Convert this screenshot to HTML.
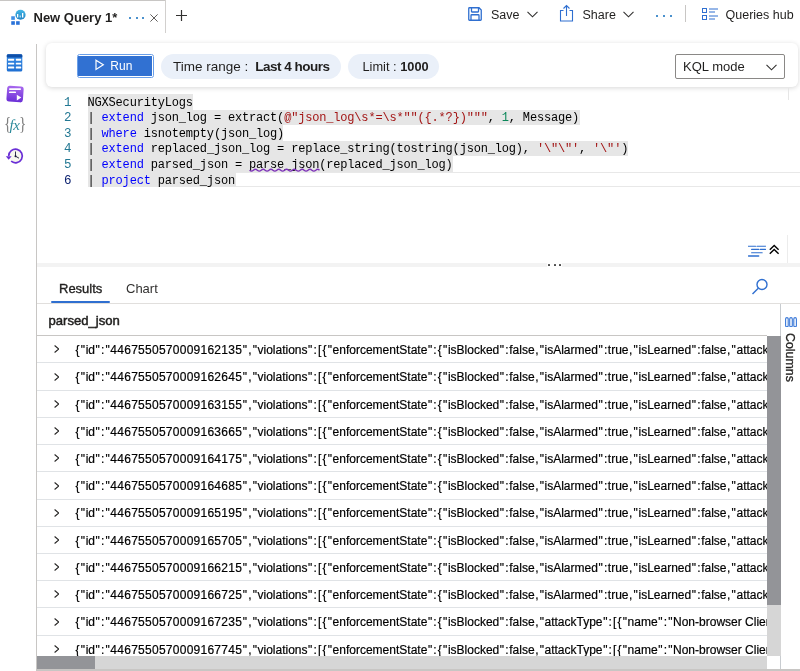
<!DOCTYPE html>
<html><head><meta charset="utf-8">
<style>
*{box-sizing:border-box;margin:0;padding:0}
html,body{width:800px;height:671px;overflow:hidden;background:#fff;font-family:"Liberation Sans",sans-serif;color:#201f1e}
.a{position:absolute}
.topline{left:0;top:0;width:166px;height:1px;background:#c8c6c4}
.tabr{left:165px;top:0;width:1px;height:33px;background:#d2d0ce}
.vsep{left:36px;top:44px;width:1px;height:627px;background:#c8c6c4}
.card{left:46px;top:43px;width:752px;height:44px;border-radius:6px;background:#fff;box-shadow:0 1px 5px rgba(0,0,0,0.16)}
.code{font-family:"Liberation Mono",monospace;font-size:12px;letter-spacing:-0.18px;white-space:pre;color:#000}
.ln{font-family:"Liberation Mono",monospace;font-size:12.5px;color:#237893;width:20px;text-align:right}
.sel{background:#e6e6e6}
.k{color:#0000ff}.s{color:#a31515}.n{color:#098658}
.row{left:37px;width:730px;height:27.22px;border-bottom:1px solid #e0e3e6;overflow:hidden}
.rowt{position:absolute;left:38px;top:6.9px;font-size:12px;color:#000;white-space:nowrap;-webkit-text-stroke:0.2px #000}
.rowt i,.rowt u{font-style:normal;text-decoration:none;letter-spacing:1.17px;margin-left:0.58px;margin-right:-0.58px}
.rowt b{font-weight:normal;letter-spacing:0.26px}
.chev{position:absolute;left:16.8px;top:9.3px;width:5.5px;height:8px}
</style></head><body><div id="root" style="position:absolute;left:0;top:0;width:800px;height:671px;will-change:transform">
<!-- top bar -->
<div class="a topline"></div>
<div class="a tabr"></div>
<svg class="a" style="left:10px;top:9px" width="17" height="16" viewBox="0 0 17 16">
 <defs><linearGradient id="cg" x1="0" y1="0" x2="0" y2="1"><stop offset="0" stop-color="#45b8e6"/><stop offset="1" stop-color="#1f82c4"/></linearGradient></defs>
 <rect x="1.25" y="7.25" width="3.6" height="3.6" fill="#3d8ee6"/><rect x="1.25" y="12.2" width="3.6" height="3.6" fill="#2a72d8"/><rect x="6.1" y="12.2" width="3.6" height="3.6" fill="#2a72d8"/>
 <circle cx="10.5" cy="5.75" r="5.1" fill="url(#cg)"/>
 <rect x="7" y="5" width="1.3" height="3.5" fill="#fff"/><rect x="9.7" y="6.5" width="0.9" height="2" fill="#fff"/><rect x="12" y="4" width="1.3" height="4.5" fill="#fff"/>
</svg>
<div class="a" style="left:33.5px;top:10px;font-size:13px;font-weight:bold;color:#201f1e">New Query 1*</div>
<div class="a" style="left:129px;top:16.5px;width:16px;height:3px;">
 <span class="a" style="left:0;top:0;width:2.2px;height:2.2px;border-radius:50%;background:#0f6cbd"></span>
 <span class="a" style="left:6.5px;top:0;width:2.2px;height:2.2px;border-radius:50%;background:#0f6cbd"></span>
 <span class="a" style="left:13px;top:0;width:2.2px;height:2.2px;border-radius:50%;background:#0f6cbd"></span>
</div>
<svg class="a" style="left:149.5px;top:14px" width="8" height="8" viewBox="0 0 8 8"><path d="M0.4 0.4L7.6 7.6M7.6 0.4L0.4 7.6" stroke="#605e5c" stroke-width="1"/></svg>
<svg class="a" style="left:176px;top:10px" width="11" height="11" viewBox="0 0 11 11"><path d="M5.5 0V11M0 5.5H11" stroke="#323130" stroke-width="1.2"/></svg>

<!-- save/share -->
<svg class="a" style="left:468px;top:6.5px" width="14" height="14" viewBox="0 0 14 14"><path d="M1.5 0.75H11L13.25 3V12.5Q13.25 13.25 12.5 13.25H1.5Q0.75 13.25 0.75 12.5V1.5Q0.75 0.75 1.5 0.75Z M3.5 0.75V4.5Q3.5 5 4 5H10Q10.5 5 10.5 4.5V0.75 M3 13.25V8.5Q3 7.75 3.75 7.75H10.25Q11 7.75 11 8.5V13.25" fill="none" stroke="#2f6fd0" stroke-width="1.3"/></svg>
<div class="a" style="left:491px;top:7.5px;font-size:12.5px;color:#201f1e">Save</div>
<svg class="a" style="left:526.5px;top:10.5px" width="11" height="7" viewBox="0 0 11 7"><path d="M0.5 0.8L5.5 5.8L10.5 0.8" fill="none" stroke="#323130" stroke-width="1.1"/></svg>
<svg class="a" style="left:559px;top:4px" width="15" height="18" viewBox="0 0 15 18"><path d="M4.5 6.5H1.5V17H13.5V6.5H10.5 M7.5 12V1.5 M4.5 4.5L7.5 1.5L10.5 4.5" fill="none" stroke="#2f6fd0" stroke-width="1.1"/></svg>
<div class="a" style="left:582.5px;top:7.5px;font-size:12.5px;color:#201f1e">Share</div>
<svg class="a" style="left:623px;top:11px" width="11" height="7" viewBox="0 0 11 7"><path d="M0.5 0.8L5.5 5.8L10.5 0.8" fill="none" stroke="#323130" stroke-width="1.1"/></svg>
<div class="a" style="left:656px;top:14.5px;width:16px;height:3px">
 <span class="a" style="left:0;top:0;width:2.2px;height:2.2px;border-radius:50%;background:#0f6cbd"></span>
 <span class="a" style="left:7px;top:0;width:2.2px;height:2.2px;border-radius:50%;background:#0f6cbd"></span>
 <span class="a" style="left:14px;top:0;width:2.2px;height:2.2px;border-radius:50%;background:#0f6cbd"></span>
</div>
<div class="a" style="left:685px;top:5px;width:1px;height:17px;background:#c8c6c4"></div>
<svg class="a" style="left:702px;top:8px" width="17" height="12" viewBox="0 0 17 12"><rect x="0.5" y="0.5" width="4" height="4" fill="none" stroke="#2f6fd0"/><rect x="0.5" y="7.5" width="4" height="4" fill="none" stroke="#2f6fd0"/><path d="M7 1H16M7 4H13M7 8H16M7 11H13" stroke="#2f6fd0" stroke-width="1"/></svg>
<div class="a" style="left:725.5px;top:7.5px;font-size:12.5px;color:#201f1e">Queries hub</div>

<!-- sidebar -->
<div class="a vsep"></div>
<!-- sidebar icons -->
<svg class="a" style="left:6px;top:54px" width="17" height="18" viewBox="0 0 17 18">
 <defs><linearGradient id="tg" x1="0" y1="0" x2="0" y2="1"><stop offset="0" stop-color="#3a8ee6"/><stop offset="1" stop-color="#1f6fd2"/></linearGradient></defs>
 <rect x="0.8" y="0.2" width="15.5" height="17.4" rx="1.6" fill="url(#tg)"/>
 <rect x="0.8" y="0.2" width="15.5" height="3.4" rx="1.2" fill="#0f4fa8"/>
 <rect x="2" y="4.8" width="6.2" height="1.9" rx="0.6" fill="#fff"/><rect x="9.8" y="4.8" width="5.4" height="1.9" rx="0.6" fill="#fff"/>
 <rect x="2" y="8.7" width="6.2" height="1.9" rx="0.6" fill="#fff"/><rect x="9.8" y="8.7" width="5.4" height="1.9" rx="0.6" fill="#fff"/>
 <rect x="2" y="12.6" width="6.2" height="1.9" rx="0.6" fill="#fff"/><rect x="9.8" y="12.6" width="5.4" height="1.9" rx="0.6" fill="#fff"/>
</svg>
<svg class="a" style="left:5px;top:84px" width="20" height="20" viewBox="0 0 20 20">
 <defs><linearGradient id="pg" x1="0" y1="0" x2="0" y2="1"><stop offset="0" stop-color="#a868ee"/><stop offset="1" stop-color="#6a2fd6"/></linearGradient></defs>
 <rect x="1.8" y="2" width="16.5" height="16" rx="2.8" fill="url(#pg)" transform="rotate(4 10 10)"/>
 <rect x="4" y="4.3" width="12" height="1.7" rx="0.8" fill="#fff"/>
 <rect x="4" y="7.6" width="7" height="1.5" rx="0.7" fill="#fff"/>
 <path d="M11.8 10.8L16.3 13.6L11.8 16.4Z" fill="#fff"/>
</svg>
<div class="a" style="left:4px;top:114px;font-family:'Liberation Serif',serif;font-size:19px;color:#808080;line-height:20px;transform:scaleX(0.8);transform-origin:0 0">{</div>
<div class="a" style="left:19px;top:114px;font-family:'Liberation Serif',serif;font-size:19px;color:#808080;line-height:20px;transform:scaleX(0.8);transform-origin:0 0">}</div>
<div class="a" style="left:9.5px;top:115.5px;font-family:'Liberation Serif',serif;font-style:italic;font-size:15px;color:#2b8a9a;line-height:18px;letter-spacing:-0.3px">fx</div>
<svg class="a" style="left:5px;top:147px" width="19" height="18" viewBox="0 0 19 18">
 <circle cx="10.5" cy="9" r="6.5" fill="#f7f7ee"/>
 <path d="M3.7 9A6.8 6.8 0 1 1 6.13 14.2" fill="none" stroke="#6a2fd6" stroke-width="1.7"/>
 <path d="M0.8 9.2L6.6 9.2L3.7 12.8Z" fill="#6a2fd6"/>
 <path d="M10.5 4.5V9.2L14 11.2" fill="none" stroke="#1a1a3a" stroke-width="0.9"/>
 <circle cx="10.5" cy="9.2" r="1" fill="#1a1a3a"/>
</svg>


<!-- toolbar card -->
<div class="a card"></div>
<div class="a" style="left:76.5px;top:54px;width:77.5px;height:23.5px;border:1.2px solid #6a9fe8;border-radius:2.5px;background:#fff;padding:0.8px">
 <div style="width:100%;height:100%;background:#3171d2;position:relative">
  <svg class="a" style="left:16.5px;top:3.3px" width="10" height="12" viewBox="0 0 10 12"><path d="M1 1.2L8.3 5.8L1 10.4Z" fill="none" stroke="#fff" stroke-width="1.2"/></svg>
  <div class="a" style="left:32px;top:3px;font-size:12px;color:#fff">Run</div>
 </div>
</div>
<div class="a" style="left:161px;top:54px;width:180px;height:25px;border-radius:13px;background:#eaf0f9"></div>
<div class="a" style="left:173px;top:59px;font-size:13.5px;color:#201f1e">Time range :&nbsp; <b style="letter-spacing:-0.5px;margin-left:-0.5px">Last 4 hours</b></div>
<div class="a" style="left:348px;top:54px;width:91px;height:25px;border-radius:13px;background:#eaf0f9"></div>
<div class="a" style="left:362.5px;top:59px;font-size:12.8px;color:#201f1e">Limit : <b>1000</b></div>
<div class="a" style="left:675px;top:54px;width:110px;height:25px;border:1px solid #8a8886;border-radius:2px;background:#fff"></div>
<div class="a" style="left:683px;top:59px;font-size:13px;color:#201f1e">KQL mode</div>
<svg class="a" style="left:766px;top:64px" width="11" height="7" viewBox="0 0 11 7"><path d="M0.5 0.8L5.5 5.8L10.5 0.8" fill="none" stroke="#323130" stroke-width="1.1"/></svg>

<!-- editor -->
<div class="a" style="left:87.5px;top:172.3px;width:712.5px;height:15.2px;border-top:1.5px solid #e8e8e8;border-bottom:1.5px solid #e8e8e8"></div>
<div class="a" style="left:787.8px;top:88px;width:1px;height:12px;background:#e6e6e6"></div>
<div class="a" style="left:786.5px;top:234.5px;width:1.2px;height:28.5px;background:#ececec"></div>
<div class="a sel" style="left:87.5px;top:94.30px;width:105.5px;height:15.5px"></div>
<div class="a sel" style="left:87.5px;top:109.80px;width:492px;height:15.5px"></div>
<div class="a sel" style="left:87.5px;top:125.30px;width:195px;height:15.5px"></div>
<div class="a sel" style="left:87.5px;top:140.80px;width:540px;height:15.5px"></div>
<div class="a sel" style="left:87.5px;top:156.30px;width:365px;height:15.5px"></div>
<div class="a sel" style="left:87.5px;top:171.80px;width:148px;height:15.5px"></div>

<div class="a ln" style="left:51.5px;top:95.8px;line-height:15.55px">1<br>2<br>3<br>4<br>5<br><span style="color:#0b216f">6</span></div>
<div class="a code" style="left:87.5px;top:95.8px;line-height:15.55px">NGXSecurityLogs
| <span class="k">extend</span> json_log = extract(<span class="s">@"json_log\s*=\s*""({.*?})"""</span>, <span class="n">1</span>, Message)
| <span class="k">where</span> isnotempty(json_log)
| <span class="k">extend</span> replaced_json_log = replace_string(tostring(json_log), <span class="s">'\"\"'</span>, <span class="s">'\"'</span>)
| <span class="k">extend</span> parsed_json = parse_json(replaced_json_log)
| <span class="k">project</span> parsed_json</div>

<svg class="a" style="left:248.5px;top:167.5px" width="71" height="5" viewBox="0 0 71 5"><path d="M0.5 2.2 Q2.45 4.0 4.40 2.2 Q6.35 0.40000000000000013 8.30 2.2 Q10.25 4.0 12.20 2.2 Q14.15 0.40000000000000013 16.10 2.2 Q18.05 4.0 20.00 2.2 Q21.95 0.40000000000000013 23.90 2.2 Q25.85 4.0 27.80 2.2 Q29.75 0.40000000000000013 31.70 2.2 Q33.65 4.0 35.60 2.2 Q37.55 0.40000000000000013 39.50 2.2 Q41.45 4.0 43.40 2.2 Q45.35 0.40000000000000013 47.30 2.2 Q49.25 4.0 51.20 2.2 Q53.15 0.40000000000000013 55.10 2.2 Q57.05 4.0 59.00 2.2 Q60.95 0.40000000000000013 62.90 2.2 Q64.85 4.0 66.80 2.2 Q68.65 0.40000000000000013 70.50 2.2" fill="none" stroke="#7d32b8" stroke-width="1.3"/></svg>
<!-- editor bottom icons -->
<svg class="a" style="left:748px;top:244px" width="18" height="13" viewBox="0 0 18 13"><path d="M0 2.2H7.6M9 2.2H17.6M3.6 5.4H10.8M12.3 5.4H17.6M3.6 8.75H14.2" stroke="#2f6fd0" stroke-width="1.1" stroke-linecap="round"/><path d="M0.5 12H10.7" stroke="#2f6fd0" stroke-width="1.4" stroke-linecap="round"/></svg>
<svg class="a" style="left:769px;top:244px" width="11" height="11" viewBox="0 0 11 11"><path d="M0.8 5.8L5.2 1.4L9.6 5.8M0.8 9.8L5.2 5.4L9.6 9.8" fill="none" stroke="#000" stroke-width="1.4"/></svg>
<div class="a" style="left:37px;top:263px;width:763px;height:4px;background:#f3f3f3"></div>
<div class="a" style="left:547px;top:263px;width:15px;height:4px;background:#fff">
 <span class="a" style="left:1.3px;top:1px;width:2px;height:2px;border-radius:0.5px;background:#4a4a4a"></span>
 <span class="a" style="left:6.6px;top:1px;width:2px;height:2px;border-radius:0.5px;background:#4a4a4a"></span>
 <span class="a" style="left:11.9px;top:1px;width:2px;height:2px;border-radius:0.5px;background:#4a4a4a"></span>
</div>

<!-- results tabs -->
<div class="a" style="left:59px;top:280.7px;font-size:13px;color:#201f1e;-webkit-text-stroke:0.35px #201f1e">Results</div>
<div class="a" style="left:51px;top:301px;width:59px;height:2px;background:#2f6fd0;border-radius:1px"></div>
<div class="a" style="left:126px;top:280.7px;font-size:13px;color:#323130">Chart</div>
<div class="a" style="left:37px;top:303px;width:763px;height:1px;background:#e1dfdd"></div>
<svg class="a" style="left:751px;top:278px" width="18" height="18" viewBox="0 0 18 18"><circle cx="11" cy="6.5" r="5" fill="none" stroke="#2f6fd0" stroke-width="1.4"/><path d="M7.3 10.2L1.5 16" stroke="#2f6fd0" stroke-width="1.4"/></svg>
<div class="a" style="left:48.5px;top:312.5px;font-size:13.1px;color:#201f1e;-webkit-text-stroke:0.5px #201f1e">parsed_json</div>
<div class="a" style="left:37px;top:335px;width:730px;height:1px;background:#c8c6c4"></div>
<div class="a" style="left:780px;top:304px;width:1px;height:367px;background:#c8ccd0"></div>
<svg class="a" style="left:785px;top:316.5px" width="12" height="10.5" viewBox="0 0 12 10.5"><rect x="0.6" y="0.6" width="2.6" height="9.3" rx="1.3" fill="none" stroke="#3a78d8" stroke-width="1.1"/><rect x="4.7" y="0.6" width="2.6" height="9.3" rx="1.3" fill="none" stroke="#3a78d8" stroke-width="1.1"/><rect x="8.8" y="0.6" width="2.6" height="9.3" rx="1.3" fill="none" stroke="#3a78d8" stroke-width="1.1"/></svg>
<div class="a" style="left:783px;top:332.5px;font-size:12.4px;color:#201f1e;-webkit-text-stroke:0.3px #201f1e;transform-origin:0 0;transform:translate(14.3px,0) rotate(90deg);white-space:nowrap">Columns</div>
<div class="a row" style="top:336.20px"><svg class="chev" viewBox="0 0 5.5 8"><path d="M0.6 0.5L4.8 4L0.6 7.5" fill="none" stroke="#252423" stroke-width="1.1"/></svg><div class="rowt"><u>{</u><i>"</i>id<i>"</i><u>:</u><i>"</i><b>4467550570009162135</b><i>"</i><u>,</u><i>"</i>violations<i>"</i><u>:[{</u><i>"</i>enforcementState<i>"</i><u>:{</u><i>"</i>isBlocked<i>"</i><u>:</u>false<u>,</u><i>"</i>isAlarmed<i>"</i><u>:</u>true<u>,</u><i>"</i>isLearned<i>"</i><u>:</u>false<u>,</u><i>"</i>attackType<i>"</i><u>:[{</u><i>"</i>name<i>"</i></div></div>
<div class="a row" style="top:363.42px"><svg class="chev" viewBox="0 0 5.5 8"><path d="M0.6 0.5L4.8 4L0.6 7.5" fill="none" stroke="#252423" stroke-width="1.1"/></svg><div class="rowt"><u>{</u><i>"</i>id<i>"</i><u>:</u><i>"</i><b>4467550570009162645</b><i>"</i><u>,</u><i>"</i>violations<i>"</i><u>:[{</u><i>"</i>enforcementState<i>"</i><u>:{</u><i>"</i>isBlocked<i>"</i><u>:</u>false<u>,</u><i>"</i>isAlarmed<i>"</i><u>:</u>true<u>,</u><i>"</i>isLearned<i>"</i><u>:</u>false<u>,</u><i>"</i>attackType<i>"</i><u>:[{</u><i>"</i>name<i>"</i></div></div>
<div class="a row" style="top:390.64px"><svg class="chev" viewBox="0 0 5.5 8"><path d="M0.6 0.5L4.8 4L0.6 7.5" fill="none" stroke="#252423" stroke-width="1.1"/></svg><div class="rowt"><u>{</u><i>"</i>id<i>"</i><u>:</u><i>"</i><b>4467550570009163155</b><i>"</i><u>,</u><i>"</i>violations<i>"</i><u>:[{</u><i>"</i>enforcementState<i>"</i><u>:{</u><i>"</i>isBlocked<i>"</i><u>:</u>false<u>,</u><i>"</i>isAlarmed<i>"</i><u>:</u>true<u>,</u><i>"</i>isLearned<i>"</i><u>:</u>false<u>,</u><i>"</i>attackType<i>"</i><u>:[{</u><i>"</i>name<i>"</i></div></div>
<div class="a row" style="top:417.86px"><svg class="chev" viewBox="0 0 5.5 8"><path d="M0.6 0.5L4.8 4L0.6 7.5" fill="none" stroke="#252423" stroke-width="1.1"/></svg><div class="rowt"><u>{</u><i>"</i>id<i>"</i><u>:</u><i>"</i><b>4467550570009163665</b><i>"</i><u>,</u><i>"</i>violations<i>"</i><u>:[{</u><i>"</i>enforcementState<i>"</i><u>:{</u><i>"</i>isBlocked<i>"</i><u>:</u>false<u>,</u><i>"</i>isAlarmed<i>"</i><u>:</u>true<u>,</u><i>"</i>isLearned<i>"</i><u>:</u>false<u>,</u><i>"</i>attackType<i>"</i><u>:[{</u><i>"</i>name<i>"</i></div></div>
<div class="a row" style="top:445.08px"><svg class="chev" viewBox="0 0 5.5 8"><path d="M0.6 0.5L4.8 4L0.6 7.5" fill="none" stroke="#252423" stroke-width="1.1"/></svg><div class="rowt"><u>{</u><i>"</i>id<i>"</i><u>:</u><i>"</i><b>4467550570009164175</b><i>"</i><u>,</u><i>"</i>violations<i>"</i><u>:[{</u><i>"</i>enforcementState<i>"</i><u>:{</u><i>"</i>isBlocked<i>"</i><u>:</u>false<u>,</u><i>"</i>isAlarmed<i>"</i><u>:</u>true<u>,</u><i>"</i>isLearned<i>"</i><u>:</u>false<u>,</u><i>"</i>attackType<i>"</i><u>:[{</u><i>"</i>name<i>"</i></div></div>
<div class="a row" style="top:472.30px"><svg class="chev" viewBox="0 0 5.5 8"><path d="M0.6 0.5L4.8 4L0.6 7.5" fill="none" stroke="#252423" stroke-width="1.1"/></svg><div class="rowt"><u>{</u><i>"</i>id<i>"</i><u>:</u><i>"</i><b>4467550570009164685</b><i>"</i><u>,</u><i>"</i>violations<i>"</i><u>:[{</u><i>"</i>enforcementState<i>"</i><u>:{</u><i>"</i>isBlocked<i>"</i><u>:</u>false<u>,</u><i>"</i>isAlarmed<i>"</i><u>:</u>true<u>,</u><i>"</i>isLearned<i>"</i><u>:</u>false<u>,</u><i>"</i>attackType<i>"</i><u>:[{</u><i>"</i>name<i>"</i></div></div>
<div class="a row" style="top:499.52px"><svg class="chev" viewBox="0 0 5.5 8"><path d="M0.6 0.5L4.8 4L0.6 7.5" fill="none" stroke="#252423" stroke-width="1.1"/></svg><div class="rowt"><u>{</u><i>"</i>id<i>"</i><u>:</u><i>"</i><b>4467550570009165195</b><i>"</i><u>,</u><i>"</i>violations<i>"</i><u>:[{</u><i>"</i>enforcementState<i>"</i><u>:{</u><i>"</i>isBlocked<i>"</i><u>:</u>false<u>,</u><i>"</i>isAlarmed<i>"</i><u>:</u>true<u>,</u><i>"</i>isLearned<i>"</i><u>:</u>false<u>,</u><i>"</i>attackType<i>"</i><u>:[{</u><i>"</i>name<i>"</i></div></div>
<div class="a row" style="top:526.74px"><svg class="chev" viewBox="0 0 5.5 8"><path d="M0.6 0.5L4.8 4L0.6 7.5" fill="none" stroke="#252423" stroke-width="1.1"/></svg><div class="rowt"><u>{</u><i>"</i>id<i>"</i><u>:</u><i>"</i><b>4467550570009165705</b><i>"</i><u>,</u><i>"</i>violations<i>"</i><u>:[{</u><i>"</i>enforcementState<i>"</i><u>:{</u><i>"</i>isBlocked<i>"</i><u>:</u>false<u>,</u><i>"</i>isAlarmed<i>"</i><u>:</u>true<u>,</u><i>"</i>isLearned<i>"</i><u>:</u>false<u>,</u><i>"</i>attackType<i>"</i><u>:[{</u><i>"</i>name<i>"</i></div></div>
<div class="a row" style="top:553.96px"><svg class="chev" viewBox="0 0 5.5 8"><path d="M0.6 0.5L4.8 4L0.6 7.5" fill="none" stroke="#252423" stroke-width="1.1"/></svg><div class="rowt"><u>{</u><i>"</i>id<i>"</i><u>:</u><i>"</i><b>4467550570009166215</b><i>"</i><u>,</u><i>"</i>violations<i>"</i><u>:[{</u><i>"</i>enforcementState<i>"</i><u>:{</u><i>"</i>isBlocked<i>"</i><u>:</u>false<u>,</u><i>"</i>isAlarmed<i>"</i><u>:</u>true<u>,</u><i>"</i>isLearned<i>"</i><u>:</u>false<u>,</u><i>"</i>attackType<i>"</i><u>:[{</u><i>"</i>name<i>"</i></div></div>
<div class="a row" style="top:581.18px"><svg class="chev" viewBox="0 0 5.5 8"><path d="M0.6 0.5L4.8 4L0.6 7.5" fill="none" stroke="#252423" stroke-width="1.1"/></svg><div class="rowt"><u>{</u><i>"</i>id<i>"</i><u>:</u><i>"</i><b>4467550570009166725</b><i>"</i><u>,</u><i>"</i>violations<i>"</i><u>:[{</u><i>"</i>enforcementState<i>"</i><u>:{</u><i>"</i>isBlocked<i>"</i><u>:</u>false<u>,</u><i>"</i>isAlarmed<i>"</i><u>:</u>true<u>,</u><i>"</i>isLearned<i>"</i><u>:</u>false<u>,</u><i>"</i>attackType<i>"</i><u>:[{</u><i>"</i>name<i>"</i></div></div>
<div class="a row" style="top:608.40px"><svg class="chev" viewBox="0 0 5.5 8"><path d="M0.6 0.5L4.8 4L0.6 7.5" fill="none" stroke="#252423" stroke-width="1.1"/></svg><div class="rowt"><u>{</u><i>"</i>id<i>"</i><u>:</u><i>"</i><b>4467550570009167235</b><i>"</i><u>,</u><i>"</i>violations<i>"</i><u>:[{</u><i>"</i>enforcementState<i>"</i><u>:{</u><i>"</i>isBlocked<i>"</i><u>:</u>false<u>,</u><i>"</i>attackType<i>"</i><u>:[{</u><i>"</i>name<i>"</i><u>:</u><i>"</i>Non-browser Client<i>"</i>}]</div></div>
<div class="a row" style="top:635.62px"><svg class="chev" viewBox="0 0 5.5 8"><path d="M0.6 0.5L4.8 4L0.6 7.5" fill="none" stroke="#252423" stroke-width="1.1"/></svg><div class="rowt"><u>{</u><i>"</i>id<i>"</i><u>:</u><i>"</i><b>4467550570009167745</b><i>"</i><u>,</u><i>"</i>violations<i>"</i><u>:[{</u><i>"</i>enforcementState<i>"</i><u>:{</u><i>"</i>isBlocked<i>"</i><u>:</u>false<u>,</u><i>"</i>attackType<i>"</i><u>:[{</u><i>"</i>name<i>"</i><u>:</u><i>"</i>Non-browser Client<i>"</i>}]</div></div>
<!-- scrollbars -->
<div class="a" style="left:767px;top:336px;width:13.5px;height:319.5px;background:#d6d6d6"></div>
<div class="a" style="left:767px;top:336px;width:13.5px;height:269px;background:#939498"></div>
<div class="a" style="left:37px;top:655.5px;width:730px;height:13.5px;background:#d6d6d6"></div>
<div class="a" style="left:37px;top:655.5px;width:58px;height:13.5px;background:#939498"></div>
<div class="a" style="left:37px;top:669px;width:763px;height:2px;background:#c8c6c4"></div>

</div></body></html>
